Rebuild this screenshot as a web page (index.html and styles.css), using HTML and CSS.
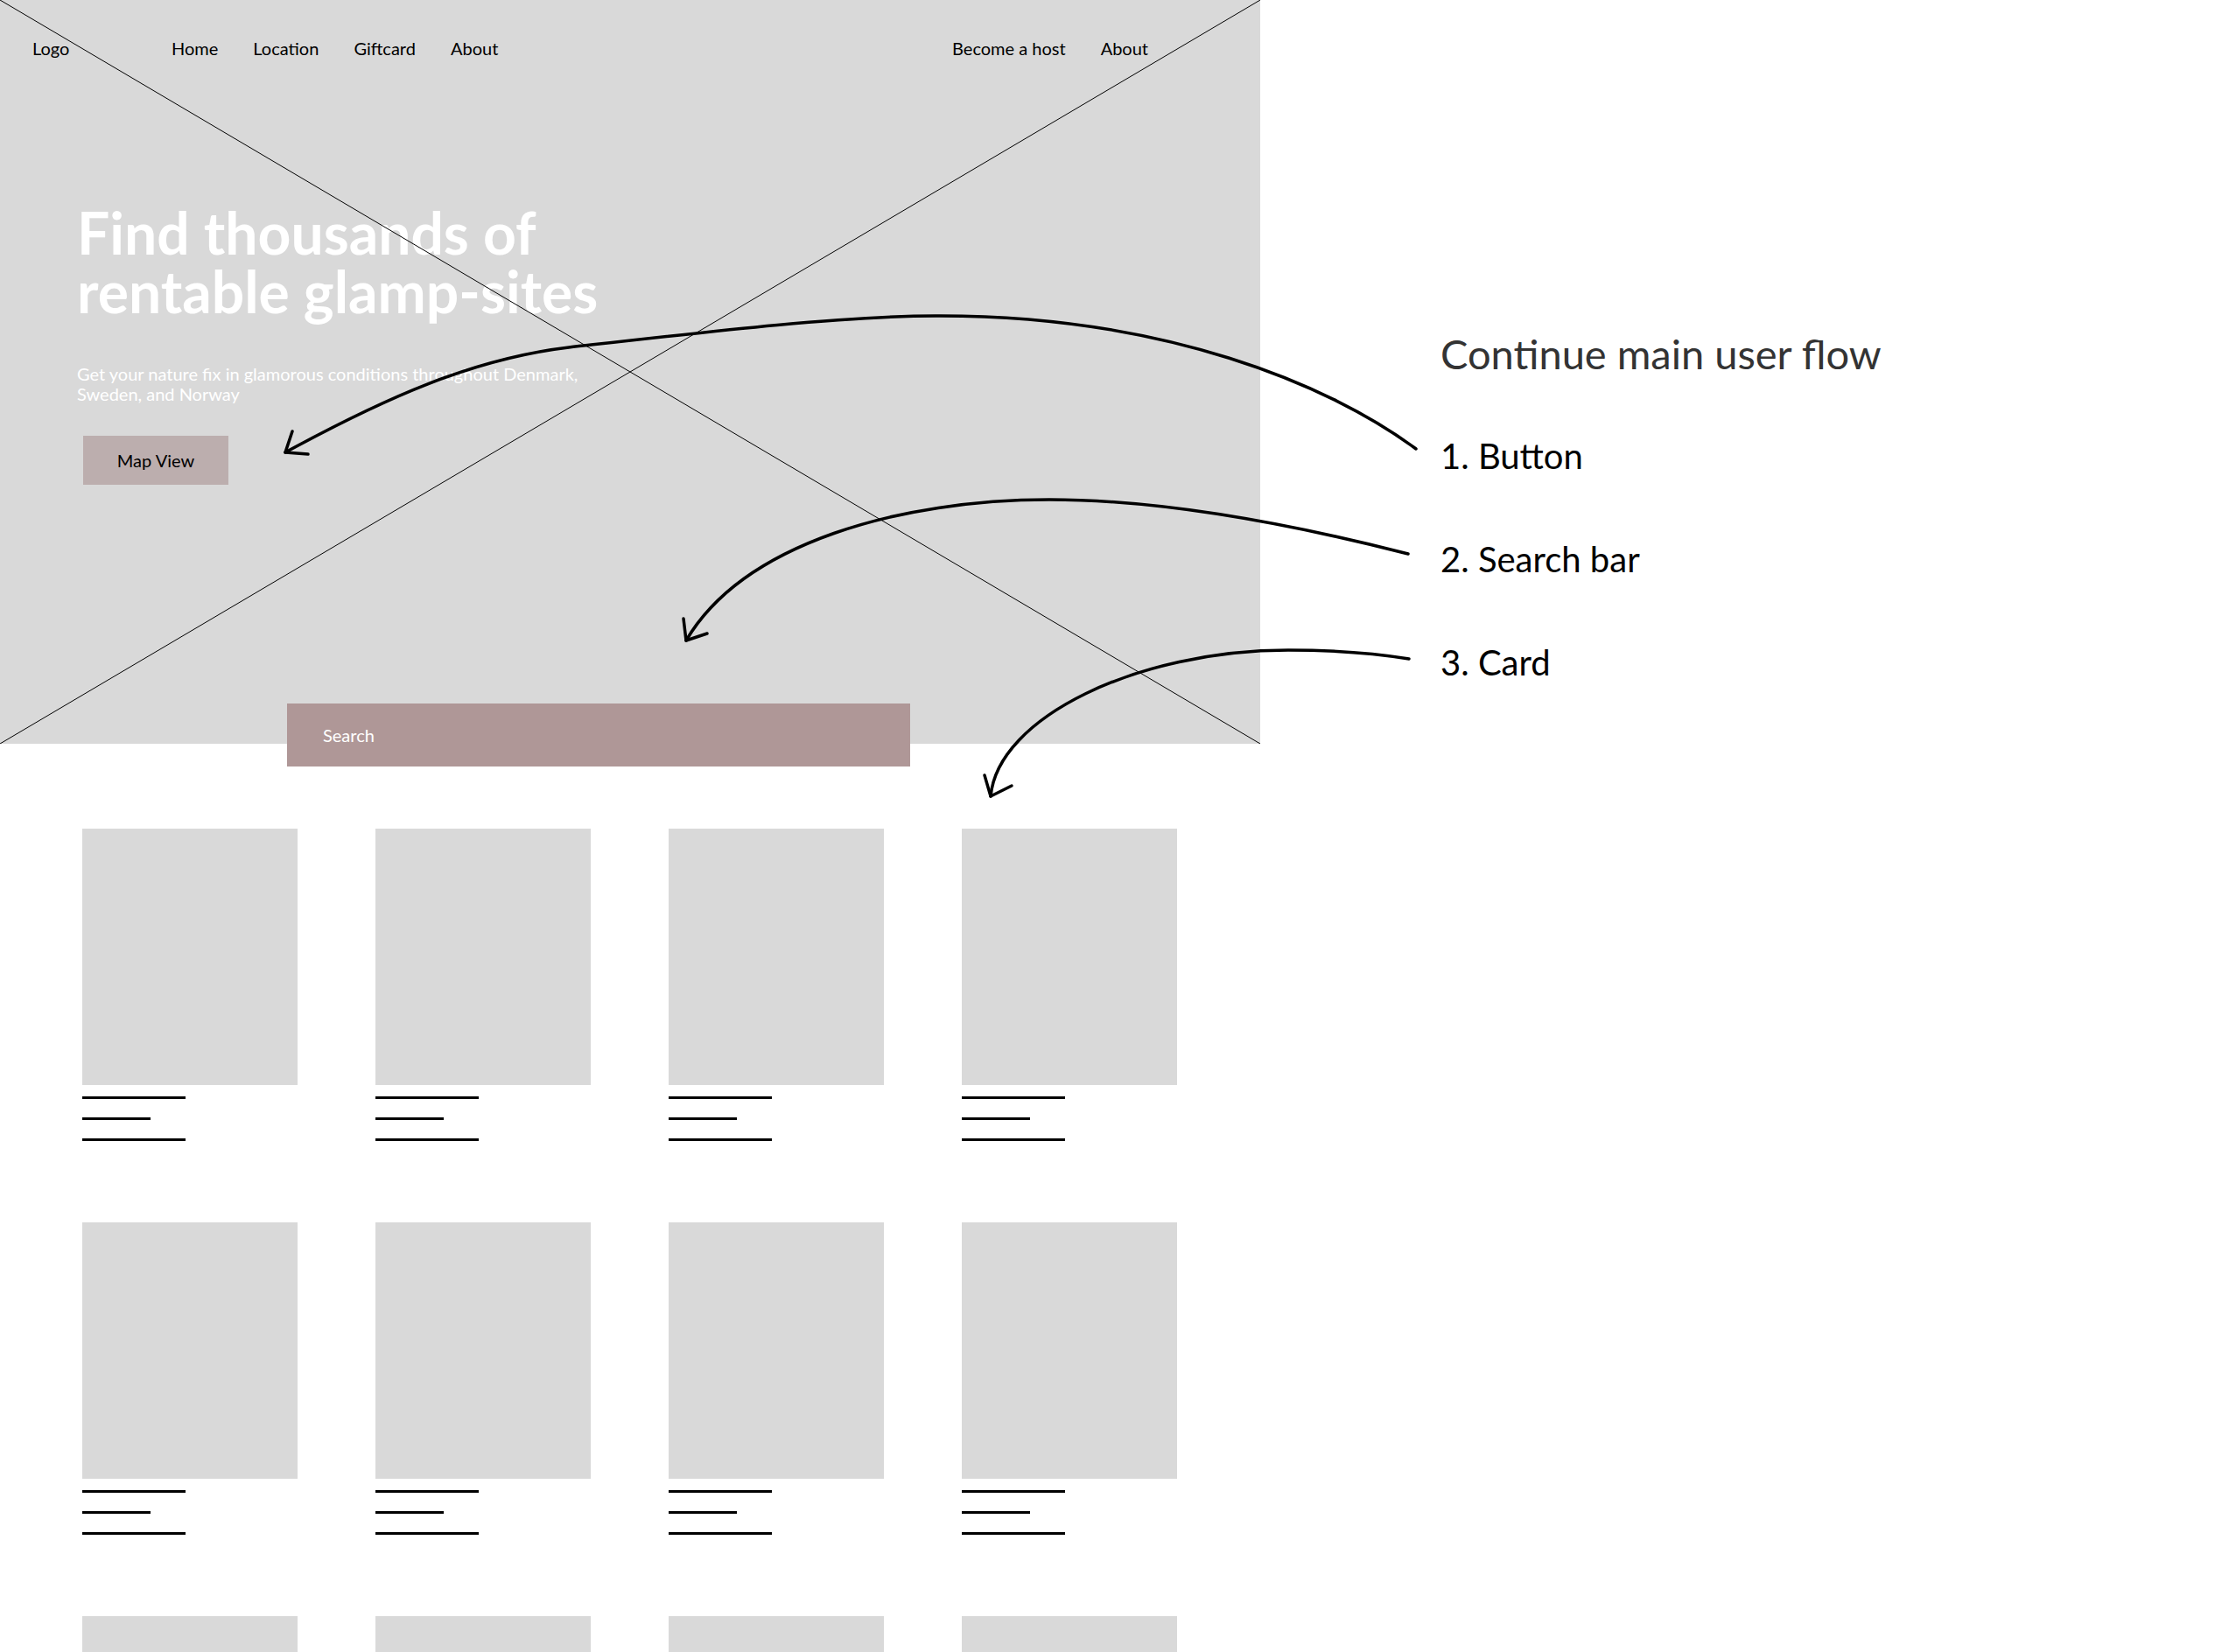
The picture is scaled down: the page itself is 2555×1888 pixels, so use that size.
FILE: index.html
```html
<!DOCTYPE html>
<html lang="en">
<head>
    <meta charset="UTF-8">
    <title>Glamp - user flow</title>
    <link rel="stylesheet" href="styles.css">
</head>
<body>
<div class="board">
    <div class="site">
        <!-- hero: image placeholder with cross -->
        <div class="hero">
            <svg class="hero-cross" viewBox="0 0 1440 850" preserveAspectRatio="none">
                <line x1="0" y1="0" x2="1440" y2="850"/>
                <line x1="0" y1="850" x2="1440" y2="0"/>
            </svg>
            <div class="nav">
                <div class="logo">Logo</div>
                <div class="nav-links">
                    <span>Home</span>
                    <span>Location</span>
                    <span>Giftcard</span>
                    <span>About</span>
                </div>
                <div class="nav-links nav-right">
                    <span>Become a host</span>
                    <span>About</span>
                </div>
            </div>
            <div class="hero-text">
                <h1>Find thousands of<br>rentable glamp-sites</h1>
                <p>Get your nature fix in glamorous conditions throughout Denmark,<br>Sweden, and Norway</p>
                <div class="btn-map">Map View</div>
            </div>
        </div>
        <div class="search">Search</div>

        <div class="cards">
            <div class="card"><div class="card-img"></div><i class="ln"></i><i class="ln ln-short"></i><i class="ln"></i></div>
            <div class="card"><div class="card-img"></div><i class="ln"></i><i class="ln ln-short"></i><i class="ln"></i></div>
            <div class="card"><div class="card-img"></div><i class="ln"></i><i class="ln ln-short"></i><i class="ln"></i></div>
            <div class="card"><div class="card-img"></div><i class="ln"></i><i class="ln ln-short"></i><i class="ln"></i></div>
            <div class="card"><div class="card-img"></div><i class="ln"></i><i class="ln ln-short"></i><i class="ln"></i></div>
            <div class="card"><div class="card-img"></div><i class="ln"></i><i class="ln ln-short"></i><i class="ln"></i></div>
            <div class="card"><div class="card-img"></div><i class="ln"></i><i class="ln ln-short"></i><i class="ln"></i></div>
            <div class="card"><div class="card-img"></div><i class="ln"></i><i class="ln ln-short"></i><i class="ln"></i></div>
            <div class="card"><div class="card-img"></div><i class="ln"></i><i class="ln ln-short"></i><i class="ln"></i></div>
            <div class="card"><div class="card-img"></div><i class="ln"></i><i class="ln ln-short"></i><i class="ln"></i></div>
            <div class="card"><div class="card-img"></div><i class="ln"></i><i class="ln ln-short"></i><i class="ln"></i></div>
            <div class="card"><div class="card-img"></div><i class="ln"></i><i class="ln ln-short"></i><i class="ln"></i></div>
        </div>
    </div>

    <!-- notes on the right -->
    <div class="notes">
        <h2>Continue main user flow</h2>
        <div class="steps">
            <div class="step">1. Button</div>
            <div class="step">2. Search bar</div>
            <div class="step">3. Card</div>
        </div>
    </div>

    <!-- arrows from notes to the elements -->
    <svg class="arrows" viewBox="0 0 2555 1888">
        <path d="M1618 513 C1520 440 1330 360 1069 361 C960 361 800 380 650 397 C540 410 440 455 326 517"/>
        <path d="M334 493 L326 517 L352 519"/>
        <path d="M1609 633 C1480 600 1330 571 1199 571 C1030 571 850 620 784 732"/>
        <path d="M781 707 L784 732 L808 724"/>
        <path d="M1610 753 C1560 745 1520 743 1472 743 C1300 743 1140 820 1132 910"/>
        <path d="M1125 886 L1132 910 L1156 898"/>
    </svg>
</div>
</body>
</html>
```

FILE: styles.css
```css
body{
    margin: 0;
    font-family: Lato, "Noto Sans", sans-serif;
    color: #000;
    background-color: #fff;
}
.board{
    position: relative;
    display: flex;
    width: 2555px;
    height: 1888px;
    overflow: hidden;
}
.site{
    width: 1440px;
    flex-shrink: 0;
}
.hero{
    position: relative;
    height: 850px;
    background-color: #d9d9d9;
}
.hero-cross{
    position: absolute;
    left: 0;
    top: 0;
    width: 100%;
    height: 100%;
    z-index: 2;
}
.hero-cross line{
    stroke: #000;
    stroke-width: 1;
}
.nav{
    display: flex;
    align-items: center;
    padding: 41px 128px 0 37px;
    font-size: 20px;
    line-height: 28px;
}
.logo{
    width: 159px;
}
.nav-links{
    display: flex;
    gap: 40px;
}
.nav-right{
    margin-left: auto;
}
.hero-text{
    padding: 163px 0 0 88px;
}
.hero-text h1{
    margin: 0;
    font-size: 66px;
    line-height: 67px;
    font-weight: 700;
    color: #fff;
}
.hero-text p{
    margin: 50px 0 0;
    font-size: 20px;
    line-height: 23px;
    color: #fff;
}
.btn-map{
    display: flex;
    align-items: center;
    justify-content: center;
    width: 166px;
    height: 56px;
    margin: 36px 0 0 7px;
    font-size: 20px;
    background-color: #bcaeae;
}
.search{
    position: relative;
    z-index: 3;
    display: flex;
    align-items: center;
    box-sizing: border-box;
    width: 712px;
    height: 72px;
    margin: -46px 0 0 328px;
    padding-left: 41px;
    font-size: 20px;
    color: #fff;
    background-color: #af9797;
}
.cards{
    display: grid;
    grid-template-columns: repeat(4, 246px);
    column-gap: 89px;
    row-gap: 93px;
    padding: 71px 0 0 94px;
}
.card{
    display: flex;
    flex-direction: column;
}
.card-img{
    height: 293px;
    background-color: #d9d9d9;
    margin-bottom: 13px;
}
.ln{
    display: block;
    width: 118px;
    height: 3px;
    margin-bottom: 21px;
    background-color: #000;
}
.ln:last-child{
    margin-bottom: 0;
}
.ln-short{
    width: 78px;
}
.notes{
    padding: 378px 0 0 206px;
}
.notes h2{
    margin: 0;
    font-size: 47px;
    line-height: 52px;
    font-weight: 400;
    color: #333;
}
.steps{
    display: flex;
    flex-direction: column;
    gap: 74px;
    margin-top: 69px;
}
.step{
    font-size: 40px;
    line-height: 44px;
}
.arrows{
    position: absolute;
    left: 0;
    top: 0;
    width: 2555px;
    height: 1888px;
    z-index: 5;
    pointer-events: none;
}
.arrows path{
    fill: none;
    stroke: #000;
    stroke-width: 3.5;
    stroke-linecap: round;
    stroke-linejoin: round;
}
```
